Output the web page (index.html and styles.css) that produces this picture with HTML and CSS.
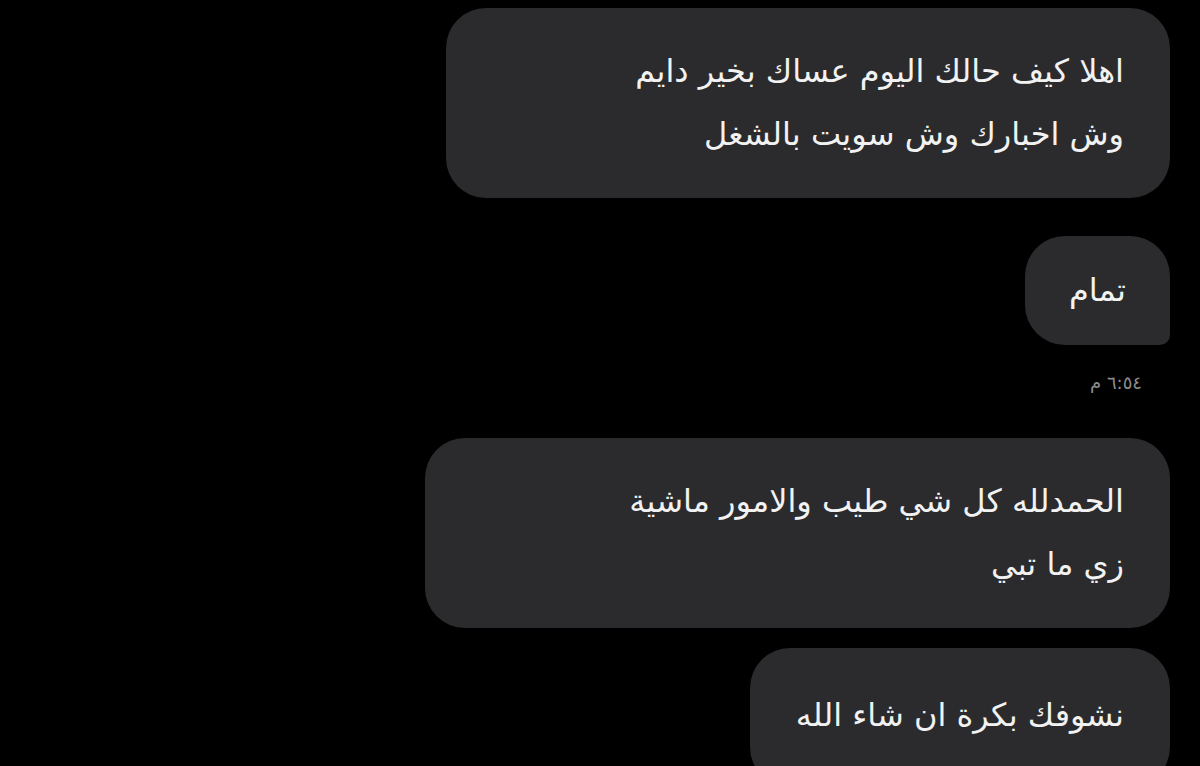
FILE: index.html
```html
<!DOCTYPE html>
<html lang="ar" dir="rtl">
<head>
<meta charset="utf-8">
<link rel="stylesheet" href="styles.css">
</head>
<body>
<div class="chat">
  <div class="bubble b1">اهلا كيف حالك اليوم عساك بخير دايم<br>وش اخبارك وش سويت بالشغل</div>
  <div class="bubble b2 tail">تمام</div>
  <div class="time">٦:٥٤ م</div>
  <div class="bubble b3">الحمدلله كل شي طيب والامور ماشية<br>زي ما تبي</div>
  <div class="bubble b4">نشوفك بكرة ان شاء الله</div>
</div>
</body>
</html>
```
FILE: styles.css
```css
html, body {
  margin: 0;
  padding: 0;
  background: #000;
  height: 766px;
  overflow: hidden;
}
.chat {
  display: flex;
  flex-direction: column;
  align-items: flex-start;
  padding: 8px 30px 0 0;
  font-family: "DejaVu Sans", "Noto Sans", sans-serif;
  color: #f2f2f2;
}
.bubble {
  background: #2b2b2d;
  border-radius: 40px;
  padding: 32px 46px 32px 46px;
  font-size: 32px;
  line-height: 63px;
}
.b1 { min-width: 632px; }
.b2 {
  margin-top: 38px;
  padding: 23px 44px 23px 44px;
  border-bottom-right-radius: 10px;
}
.time {
  margin: 18px 28px 0 0;
  font-size: 18px;
  color: #8c8c8c;
  line-height: 40px;
}
.b3 { margin-top: 35px; min-width: 653px; }
.b4 {
  margin-top: 20px;
  padding: 36px 46px 40px 46px;
}
```
